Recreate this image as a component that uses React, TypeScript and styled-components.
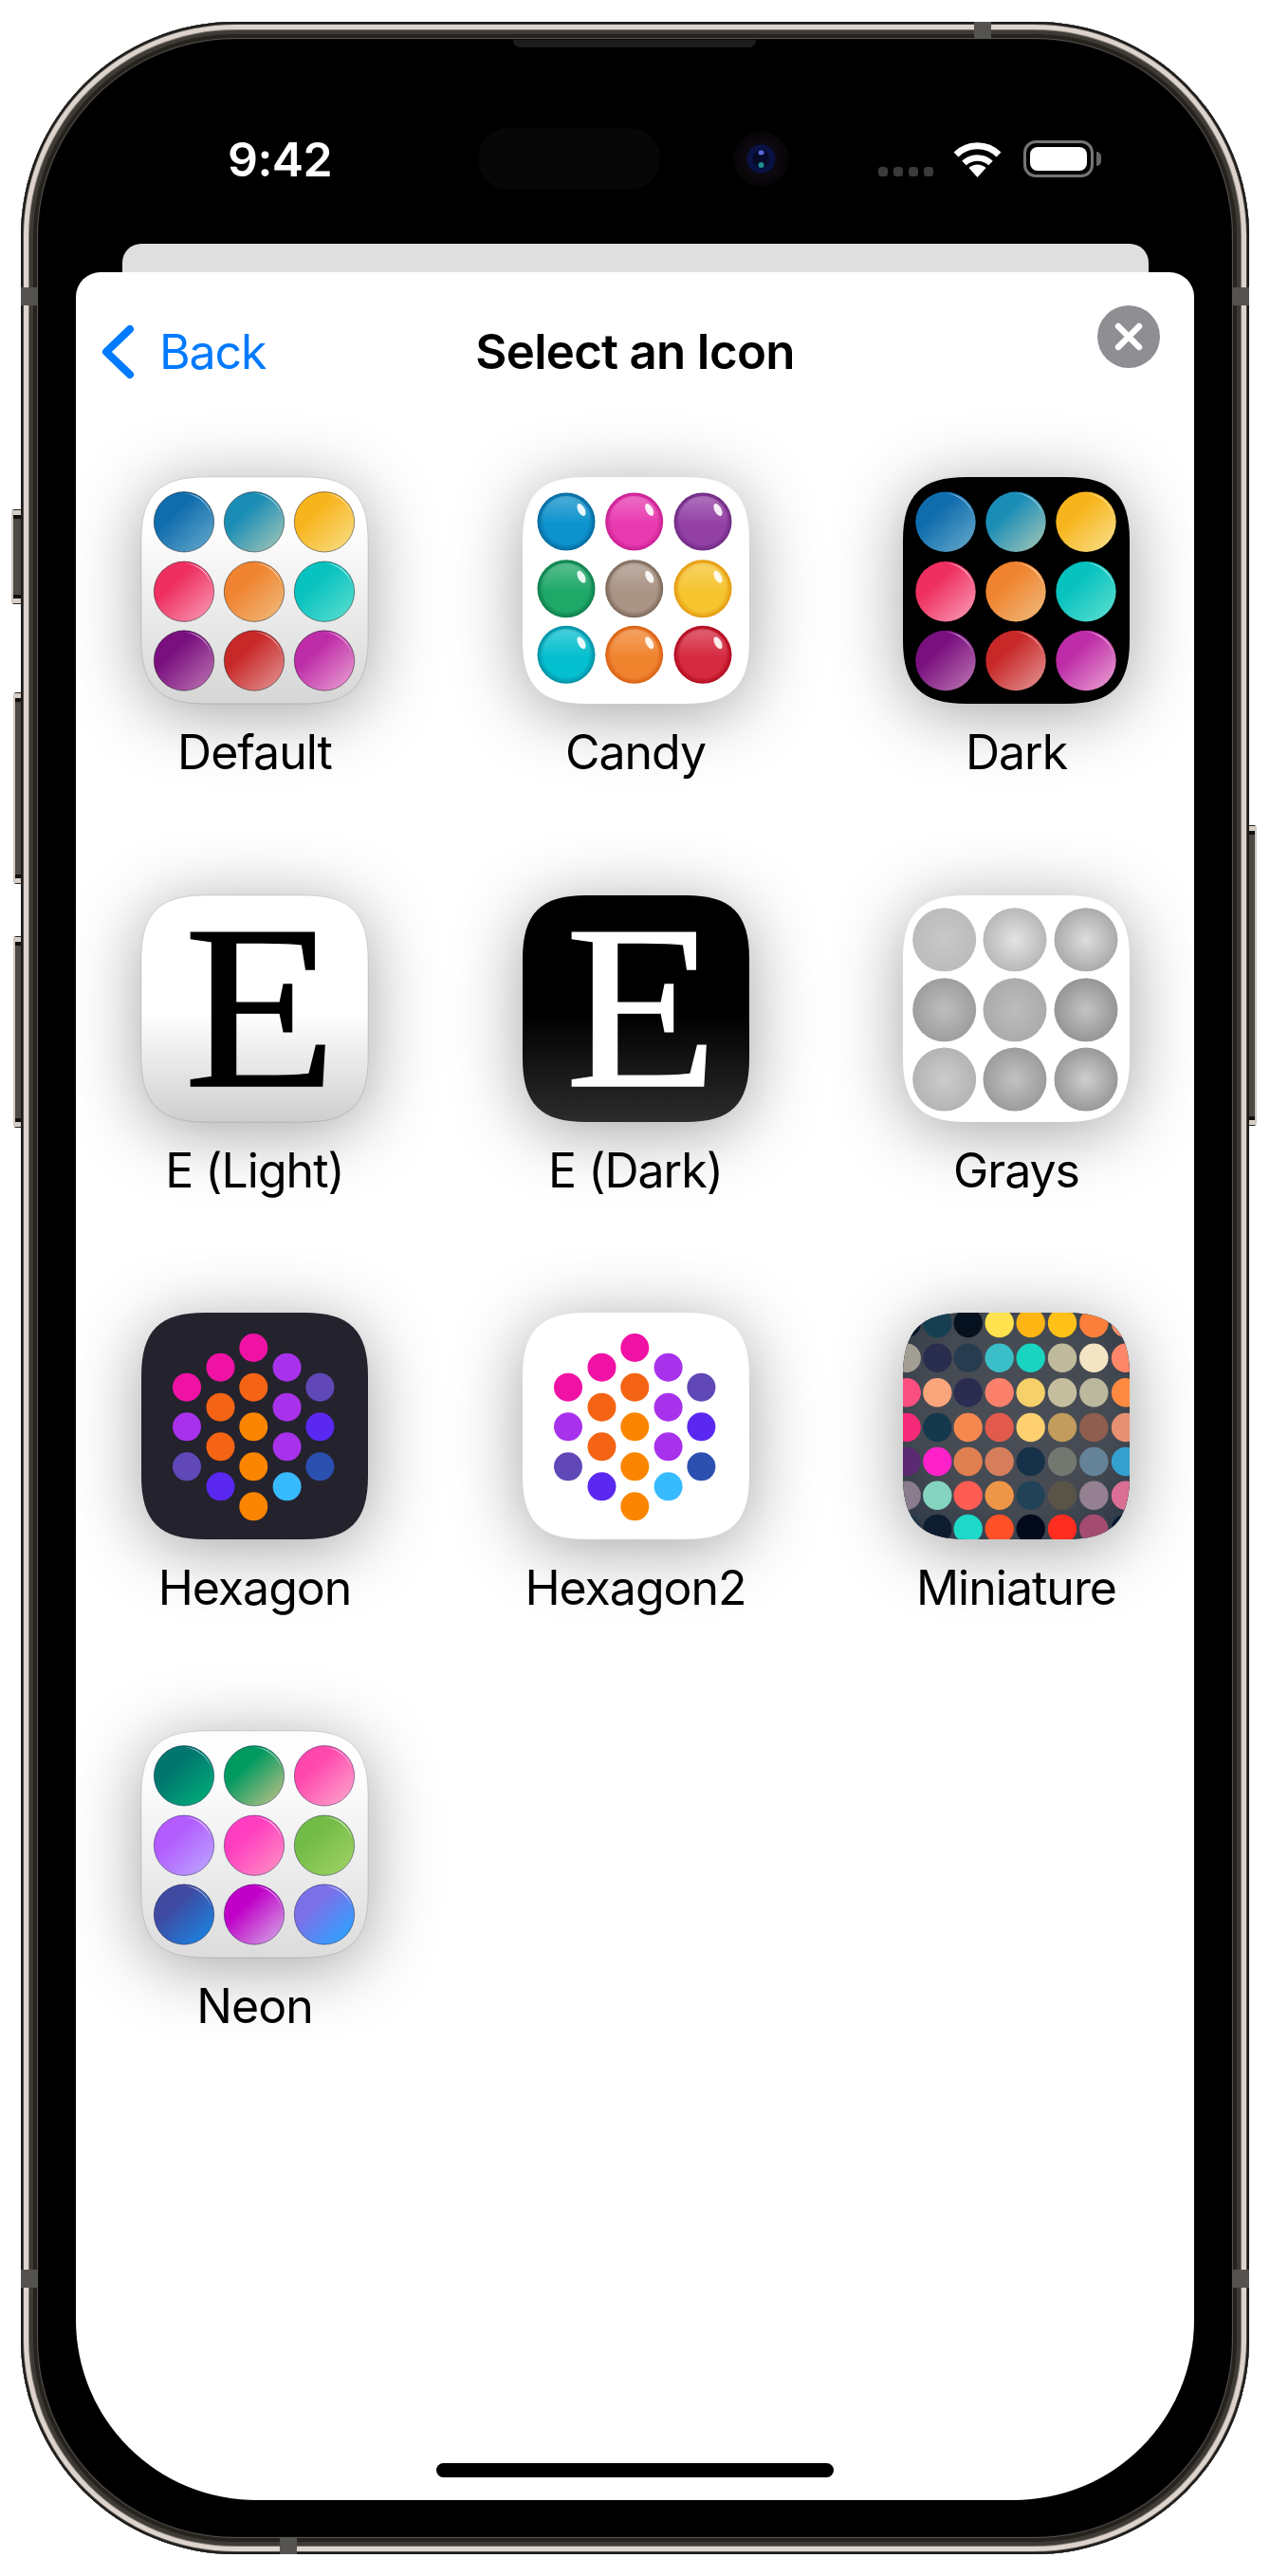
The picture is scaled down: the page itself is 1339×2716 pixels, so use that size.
import React from "react";
import styled, { createGlobalStyle } from "styled-components";

const Global = createGlobalStyle`
  html, body { margin: 0; padding: 0; background: #fff; }
  body { font-family: "Inter", "Liberation Sans", sans-serif; -webkit-font-smoothing: antialiased; }
  * { box-sizing: border-box; }
`;

const Page = styled.div`
  width: 1339px;
  height: 2716px;
  padding: 23px 22px;
  background: #fff;
`;

const Phone = styled.div`
  position: relative;
  width: 1295px;
  height: 2670px;
`;

const Frame = styled.div`
  position: relative;
  width: 100%;
  height: 100%;
  padding: 112px 59px 0;
  background: #000;
  border-radius: 226px;
  box-shadow:
    inset 0 0 0 2px #1d1b19,
    inset 0 0 0 3px #4a4743,
    inset 0 0 0 8px #dcd4cc,
    inset 0 0 0 9px #7a746c,
    inset 0 0 0 13px #3e3a35,
    inset 0 0 0 17px #26231f,
    inset 0 0 0 18px #55524f,
    inset 0 0 0 19px #0c0c0c;
`;

const SideButton = styled.div<{ $top: number; $height: number; $wide?: boolean; $right?: boolean }>`
  position: absolute;
  top: ${(p) => p.$top}px;
  height: ${(p) => p.$height}px;
  width: ${(p) => (p.$wide ? 11 : 9)}px;
  ${(p) => (p.$right ? "left: 1294px;" : `left: ${p.$wide ? -10 : -8}px;`)}
  border: 1px solid #26231f;
  border-radius: ${(p) => (p.$right ? "0 3px 3px 0" : "3px 0 0 3px")};
  background: linear-gradient(
    to bottom,
    #d8d0c8 0, #d8d0c8 5px, #111 5px, #111 9px, #4c4843 9px,
    #4c4843 calc(100% - 9px), #111 calc(100% - 9px), #111 calc(100% - 5px), #d8d0c8 calc(100% - 5px)
  );
  ${(p) => (p.$right ? "border-right: 2px solid #cfc7bf;" : "border-left: 2px solid #cfc7bf;")}
`;

const AntennaBand = styled.div<{ $edge: "left" | "right" | "top" | "bottom"; $at: number }>`
  position: absolute;
  background: #55534f;
  ${(p) =>
    p.$edge === "left" || p.$edge === "right"
      ? `${p.$edge}: 0; top: ${p.$at}px; width: 18px; height: 19px;`
      : `${p.$edge}: 0; left: ${p.$at}px; width: 18px; height: 18px;`}
`;

const Speaker = styled.div`
  position: absolute;
  top: 19px;
  left: 519px;
  width: 256px;
  height: 8px;
  background: #1c1c1c;
  border-radius: 0 0 7px 7px;
`;

const StatusBar = styled.div`
  display: flex;
  align-items: center;
  height: 65px;
  margin-bottom: 57px;
`;

const Time = styled.div`
  margin-left: 159px;
  width: 108px;
  color: #fff;
  font-size: 50px;
  font-weight: 600;
  line-height: 1;
  letter-spacing: -0.6px;
  white-space: nowrap;
`;

const Island = styled.div`
  margin-left: 156px;
  width: 192px;
  height: 65px;
  border-radius: 33px;
  background: #070707;
`;

const CameraSvg = styled.svg`
  margin-left: 77px;
  width: 59px;
  height: 59px;
  flex: none;
`;

const SignalDots = styled.div`
  display: flex;
  gap: 6px;
  margin-left: 94px;
  margin-top: 27px;
`;

const SignalDot = styled.span`
  width: 10px;
  height: 10px;
  border-radius: 3.5px;
  background: #3b3b3b;
`;

const WifiSvg = styled.svg`
  margin-left: 21px;
  width: 51px;
  height: 38px;
  flex: none;
`;

const Battery = styled.div`
  position: relative;
  margin-left: 23px;
  width: 74px;
  height: 39px;
  padding: 4px;
  border: 3px solid #757575;
  border-radius: 13px;
  &::after {
    content: "";
    position: absolute;
    top: 9px;
    right: -11px;
    width: 5px;
    height: 15px;
    border-radius: 0 5px 5px 0;
    background: #666;
  }
`;

const BatteryFill = styled.div`
  width: 100%;
  height: 100%;
  background: #fff;
  border-radius: 8px;
`;

const BackSheet = styled.div`
  height: 30px;
  margin: 0 47px 0 48px;
  background: #dfdfdf;
  border-radius: 20px 20px 0 0;
`;

const Sheet = styled.div`
  display: flex;
  flex-direction: column;
  height: 2349px;
  margin: 0 -1px;
  background: #fff;
  border-radius: 26px 26px 190px 190px;
`;

const NavBar = styled.div`
  display: grid;
  grid-template-columns: 1fr auto 1fr;
  align-items: center;
  height: 60px;
  margin-top: 54px;
  padding: 0 36px 0 27px;
`;

const BackButton = styled.div`
  display: flex;
  align-items: center;
  gap: 25px;
  color: #007aff;
  font-size: 50px;
  letter-spacing: -1.1px;
  line-height: 60px;
`;

const Chevron = styled.svg`
  width: 36px;
  height: 60px;
  flex: none;
`;

const Title = styled.div`
  margin-left: 9px;
  color: #000;
  font-size: 51px;
  font-weight: 600;
  letter-spacing: -0.75px;
  line-height: 60px;
  white-space: nowrap;
`;

const CloseButton = styled.div`
  justify-self: end;
  align-self: start;
  display: flex;
  align-items: center;
  justify-content: center;
  width: 66px;
  height: 66px;
  margin-top: -19px;
  border-radius: 50%;
  background: #8e8e93;
`;

const CloseSvg = styled.svg`
  width: 34px;
  height: 34px;
`;

const IconGrid = styled.div`
  display: grid;
  grid-template-columns: repeat(3, 239px);
  grid-auto-rows: 440.5px;
  column-gap: 162.5px;
  margin-top: 102px;
  padding-left: 69px;
`;

const IconItem = styled.div`
  display: flex;
  flex-direction: column;
  align-items: center;
`;

const TileSvg = styled.svg`
  display: block;
  width: 239px;
  height: 239px;
  overflow: visible;
  flex: none;
  filter: drop-shadow(0 10px 36px rgba(0, 0, 0, 0.36));
`;

const IconLabel = styled.span`
  margin-top: 21px;
  color: #000;
  font-size: 50px;
  line-height: 60px;
  letter-spacing: -1px;
  white-space: nowrap;
`;

const HomeIndicator = styled.div`
  align-self: center;
  width: 419px;
  height: 15px;
  margin-top: auto;
  margin-bottom: 24px;
  border-radius: 8px;
  background: #000;
`;

const SQUIRCLE =
  "M67 0H172C220 0 239 19 239 67V172C239 220 220 239 172 239H67C19 239 0 220 0 172V67C0 19 19 0 67 0Z";

const Grad = ({ id, stops, v }: { id: string; stops: [number, string][]; v?: boolean }) => (
  <linearGradient id={id} x1={v ? 0 : 0.18} y1={v ? 0 : 0.2} x2={v ? 0 : 0.86} y2={v ? 1 : 0.92}>
    {stops.map(([o, c]) => (
      <stop key={o} offset={o} stopColor={c} />
    ))}
  </linearGradient>
);

type Pair = [string, string];

const Gloss = ({
  name,
  colors,
  tile,
  edge,
}: {
  name: string;
  colors: Pair[];
  tile: [string, string] | null;
  edge: string;
}) => {
  const xs = [45, 119, 193];
  const ys = [47.3, 120.7, 193.5];
  return (
    <TileSvg viewBox="0 0 239 239">
      <defs>
        {tile && <Grad id={`${name}-t`} v stops={[[0, tile[0]], [0.2, tile[0]], [1, tile[1]]]} />}
        {colors.map((c, i) => (
          <Grad key={i} id={`${name}-${i}`} stops={[[0.22, c[0]], [1, c[1]]]} />
        ))}
      </defs>
      <path d={SQUIRCLE} fill={tile ? `url(#${name}-t)` : "#000"} stroke={tile ? "rgba(0,0,0,0.13)" : "none"} />
      {colors.map((_, i) => {
        const x = xs[i % 3];
        const y = ys[Math.floor(i / 3)];
        return (
          <g key={i} transform={`translate(${x} ${y})`}>
            <circle r="31.7" fill={`url(#${name}-${i})`} stroke={edge} strokeWidth="0.8" />
            <path
              d="M0 -30.3A30.3 30.3 0 0 1 28.6 -8.5A34 34 0 0 0 0 -30.3Z"
              fill="#fff"
              fillOpacity="0.78"
            />
          </g>
        );
      })}
    </TileSvg>
  );
};

const defaultColors: Pair[] = [
  ["#0f6cad", "#5aa2c8"],
  ["#1a8db6", "#93c0b8"],
  ["#f8b41c", "#f8da7c"],
  ["#ee2f60", "#f88dab"],
  ["#f0832f", "#efb473"],
  ["#07c2bf", "#52dbce"],
  ["#7a1080", "#b468ac"],
  ["#c82828", "#e08686"],
  ["#be2ca8", "#e492cc"],
];

const neonColors: Pair[] = [
  ["#00766f", "#00aa78"],
  ["#009a60", "#aabd82"],
  ["#ff48ae", "#ff9cc9"],
  ["#b35cff", "#ba9eff"],
  ["#ff3dc0", "#ff88c2"],
  ["#74bc48", "#9cd062"],
  ["#3f4aa0", "#1c82de"],
  ["#c000c8", "#d294e2"],
  ["#7c70e8", "#2ea2ff"],
];

const candyColors: Pair[] = [
  ["#0c92cc", "#06689f"],
  ["#e93ab0", "#c81f92"],
  ["#9340a5", "#6f2a83"],
  ["#1fa968", "#0e7d4c"],
  ["#a99485", "#7b675a"],
  ["#f5c42e", "#e5980e"],
  ["#04bfcf", "#058ea3"],
  ["#f0842e", "#d95f12"],
  ["#d62a40", "#b00a1e"],
];

const CandyIcon = () => {
  const xs = [46, 117.7, 190];
  const ys = [47, 117.7, 187.3];
  return (
    <TileSvg viewBox="0 0 239 239">
      <defs>
        {candyColors.map((c, i) => (
          <radialGradient key={i} id={`candy-${i}`}>
            <stop offset="0" stopColor={c[0]} />
            <stop offset="0.78" stopColor={c[0]} />
            <stop offset="1" stopColor={c[1]} />
          </radialGradient>
        ))}
        <linearGradient id="candy-sheen" x1="0" y1="0" x2="0" y2="1">
          <stop offset="0" stopColor="#fff" stopOpacity="0.26" />
          <stop offset="0.55" stopColor="#fff" stopOpacity="0" />
        </linearGradient>
      </defs>
      <path d={SQUIRCLE} fill="#fff" />
      {candyColors.map((_, i) => (
        <g key={i} transform={`translate(${xs[i % 3]} ${ys[Math.floor(i / 3)]})`}>
          <circle r="30.5" fill={`url(#candy-${i})`} />
          <circle r="27" fill="url(#candy-sheen)" />
          <ellipse cx="16" cy="-12.5" rx="3.6" ry="7" transform="rotate(-28 16 -12.5)" fill="#fff" fillOpacity="0.9" />
        </g>
      ))}
    </TileSvg>
  );
};

const LetterIcon = ({ name, top, bottom, ink }: { name: string; top: string; bottom: string; ink: string }) => (
  <TileSvg viewBox="0 0 239 239">
    <defs>
      <Grad id={name} v stops={[[0, top], [0.52, top], [1, bottom]]} />
    </defs>
    <path d={SQUIRCLE} fill={`url(#${name})`} stroke={ink === "#000" ? "rgba(0,0,0,0.13)" : "none"} />
    <text
      transform="translate(125.5 201) scale(1.07 1)"
      textAnchor="middle"
      fill={ink}
      stroke={ink}
      strokeWidth="1.4"
      fontFamily="'Liberation Serif', serif"
      fontSize="247"
    >
      E
    </text>
  </TileSvg>
);

const grayDots: Pair[] = [
  ["#c8c8c8", "#bcbcbc"],
  ["#e4e4e4", "#b8b8b8"],
  ["#dddddd", "#ababab"],
  ["#bebebe", "#9e9e9e"],
  ["#bcbcbc", "#ababab"],
  ["#c4c4c4", "#959595"],
  ["#cccccc", "#b4b4b4"],
  ["#c2c2c2", "#9c9c9c"],
  ["#cecece", "#999999"],
];

const GraysIcon = () => {
  const xs = [43.7, 118, 193];
  const ys = [46.7, 120.7, 194];
  return (
    <TileSvg viewBox="0 0 239 239">
      <defs>
        {grayDots.map((c, i) => (
          <radialGradient key={i} id={`gray-${i}`}>
            <stop offset="0" stopColor={c[0]} />
            <stop offset="1" stopColor={c[1]} />
          </radialGradient>
        ))}
      </defs>
      <path d={SQUIRCLE} fill="#fff" />
      {grayDots.map((_, i) => (
        <circle key={i} cx={xs[i % 3]} cy={ys[Math.floor(i / 3)]} r="33.5" fill={`url(#gray-${i})`} />
      ))}
    </TileSvg>
  );
};

const PINK = "#f012a4";
const PURP = "#a832ec";
const INDI = "#6048b8";
const ORNG = "#f46414";
const AMBR = "#fb8500";
const VIOL = "#5a28f0";

const hexDots: [number, number, string][] = [
  [48, 78.7, PINK],
  [48, 120.3, PURP],
  [48, 162.3, INDI],
  [83.5, 57.7, PINK],
  [83.5, 99.7, ORNG],
  [83.5, 141.3, ORNG],
  [83.5, 183.3, VIOL],
  [118.3, 37, PINK],
  [118.3, 78.7, ORNG],
  [118.3, 120.3, AMBR],
  [118.3, 162.3, AMBR],
  [118.3, 204.3, AMBR],
  [153.6, 57.7, PURP],
  [153.6, 99.7, PURP],
  [153.6, 141.3, PURP],
  [153.6, 183.3, "#38baff"],
  [188.4, 78.7, INDI],
  [188.4, 120.3, VIOL],
  [188.4, 162.3, "#2c50b0"],
];

const HexIcon = ({ fill }: { fill: string }) => (
  <TileSvg viewBox="0 0 239 239">
    <path d={SQUIRCLE} fill={fill} />
    {hexDots.map(([x, y, c], i) => (
      <circle key={i} cx={x} cy={y} r="15" fill={c} />
    ))}
  </TileSvg>
);

const miniRows = [
  ["#061428", "#163f52", "#06111f", "#ffe24e", "#ffb514", "#ffc018", "#fb7f3a", "#fa8f6c"],
  ["#a39e94", "#2a2e4e", "#283c50", "#3abfc8", "#18d4c0", "#c0ba9c", "#f3e5c4", "#fd8768"],
  ["#fa4f80", "#fba57c", "#2c2c50", "#fb806c", "#f6d068", "#c4be9e", "#bcb89e", "#fe8a42"],
  ["#f52a78", "#14384c", "#f6884e", "#e25a4c", "#fed070", "#c29c5c", "#8f5e4e", "#e69074"],
  ["#5b2a72", "#ff22c8", "#e08050", "#d67e5c", "#163248", "#727870", "#648298", "#34a0d0"],
  ["#8a7c8c", "#84d4c0", "#ff5c54", "#ee9648", "#224258", "#5a5448", "#948090", "#da6e94"],
  ["#1e3448", "#0e1c30", "#1ed8c8", "#ff5028", "#020a1c", "#ff2c20", "#a44c70", "#04182e"],
];
const miniX = [3.7, 36.3, 68.7, 101.7, 134.7, 168, 201.3, 235];
const miniY = [11, 47.7, 84.3, 121, 157, 192.7, 228];

const MiniatureIcon = () => (
  <TileSvg viewBox="0 0 239 239">
    <defs>
      <clipPath id="mini-clip">
        <path d={SQUIRCLE} />
      </clipPath>
      <radialGradient id="mini-bg" cx="0.5" cy="0.45" r="0.7">
        <stop offset="0" stopColor="#4a4e56" />
        <stop offset="0.6" stopColor="#454a52" />
        <stop offset="1" stopColor="#2c3846" />
      </radialGradient>
    </defs>
    <path d={SQUIRCLE} fill="#454a52" />
    <g clipPath="url(#mini-clip)">
      <rect width="239" height="239" fill="url(#mini-bg)" />
      {miniRows.map((row, r) =>
        row.map((c, i) => <circle key={`${r}-${i}`} cx={miniX[i]} cy={miniY[r]} r="15.2" fill={c} />)
      )}
    </g>
  </TileSvg>
);

const icons: { label: string; node: React.ReactNode }[] = [
  { label: "Default", node: <Gloss name="def" colors={defaultColors} tile={["#ffffff", "#d6d6d6"]} edge="rgba(0,0,0,0.55)" /> },
  { label: "Candy", node: <CandyIcon /> },
  { label: "Dark", node: <Gloss name="dark" colors={defaultColors} tile={null} edge="none" /> },
  { label: "E (Light)", node: <LetterIcon name="el" top="#ffffff" bottom="#cecece" ink="#000" /> },
  { label: "E (Dark)", node: <LetterIcon name="ed" top="#000000" bottom="#2c2c2c" ink="#fff" /> },
  { label: "Grays", node: <GraysIcon /> },
  { label: "Hexagon", node: <HexIcon fill="#24222d" /> },
  { label: "Hexagon2", node: <HexIcon fill="#ffffff" /> },
  { label: "Miniature", node: <MiniatureIcon /> },
  { label: "Neon", node: <Gloss name="neon" colors={neonColors} tile={["#fdfdfd", "#dcdcdc"]} edge="rgba(0,0,60,0.5)" /> },
];

export default function App() {
  return (
    <>
      <Global />
      <Page>
        <Phone>
          <SideButton $top={514} $height={100} $wide />
          <SideButton $top={707} $height={202} />
          <SideButton $top={964} $height={202} />
          <SideButton $top={847} $height={317} $right />
          <Frame>
            <AntennaBand $edge="left" $at={280} />
            <AntennaBand $edge="right" $at={280} />
            <AntennaBand $edge="left" $at={2370} />
            <AntennaBand $edge="right" $at={2370} />
            <AntennaBand $edge="top" $at={1005} />
            <AntennaBand $edge="bottom" $at={273} />
            <Speaker />
            <StatusBar>
              <Time>9:42</Time>
              <Island />
              <CameraSvg viewBox="0 0 59 59">
                <defs>
                  <radialGradient id="cam-outer">
                    <stop offset="0" stopColor="#14102a" />
                    <stop offset="0.6" stopColor="#0c080f" />
                    <stop offset="1" stopColor="#070507" />
                  </radialGradient>
                </defs>
                <circle cx="29.5" cy="29.5" r="29" fill="url(#cam-outer)" />
                <circle cx="29.5" cy="29.5" r="15" fill="#0a1245" />
                <circle cx="29.5" cy="29.5" r="9" fill="#070a26" />
                <ellipse cx="29.5" cy="23" rx="3" ry="2.5" fill="#5a6ae0" />
                <ellipse cx="29.5" cy="36" rx="3" ry="3" fill="#1f8f8f" />
              </CameraSvg>
              <SignalDots>
                <SignalDot />
                <SignalDot />
                <SignalDot />
                <SignalDot />
              </SignalDots>
              <WifiSvg viewBox="0 0 51 38" fill="none" stroke="#fff">
                <path d="M3 14A32 32 0 0 1 48 14" strokeWidth="7" />
                <path d="M11.5 23A20.5 20.5 0 0 1 39.5 23" strokeWidth="6.5" />
                <path d="M25.5 38L16.5 28A13 13 0 0 1 34.5 28Z" fill="#fff" stroke="none" />
              </WifiSvg>
              <Battery>
                <BatteryFill />
              </Battery>
            </StatusBar>
            <BackSheet />
            <Sheet>
              <NavBar>
                <BackButton>
                  <Chevron viewBox="0 0 36 60" fill="none" stroke="#007aff" strokeWidth="8" strokeLinecap="round" strokeLinejoin="round">
                    <path d="M30 6L5 30L30 54" />
                  </Chevron>
                  Back
                </BackButton>
                <Title>Select an Icon</Title>
                <CloseButton>
                  <CloseSvg viewBox="0 0 34 34" fill="none" stroke="#fff" strokeWidth="6.5" strokeLinecap="round">
                    <path d="M6 6L28 28M28 6L6 28" />
                  </CloseSvg>
                </CloseButton>
              </NavBar>
              <IconGrid>
                {icons.map((icon) => (
                  <IconItem key={icon.label}>
                    {icon.node}
                    <IconLabel>{icon.label}</IconLabel>
                  </IconItem>
                ))}
              </IconGrid>
              <HomeIndicator />
            </Sheet>
          </Frame>
        </Phone>
      </Page>
    </>
  );
}
